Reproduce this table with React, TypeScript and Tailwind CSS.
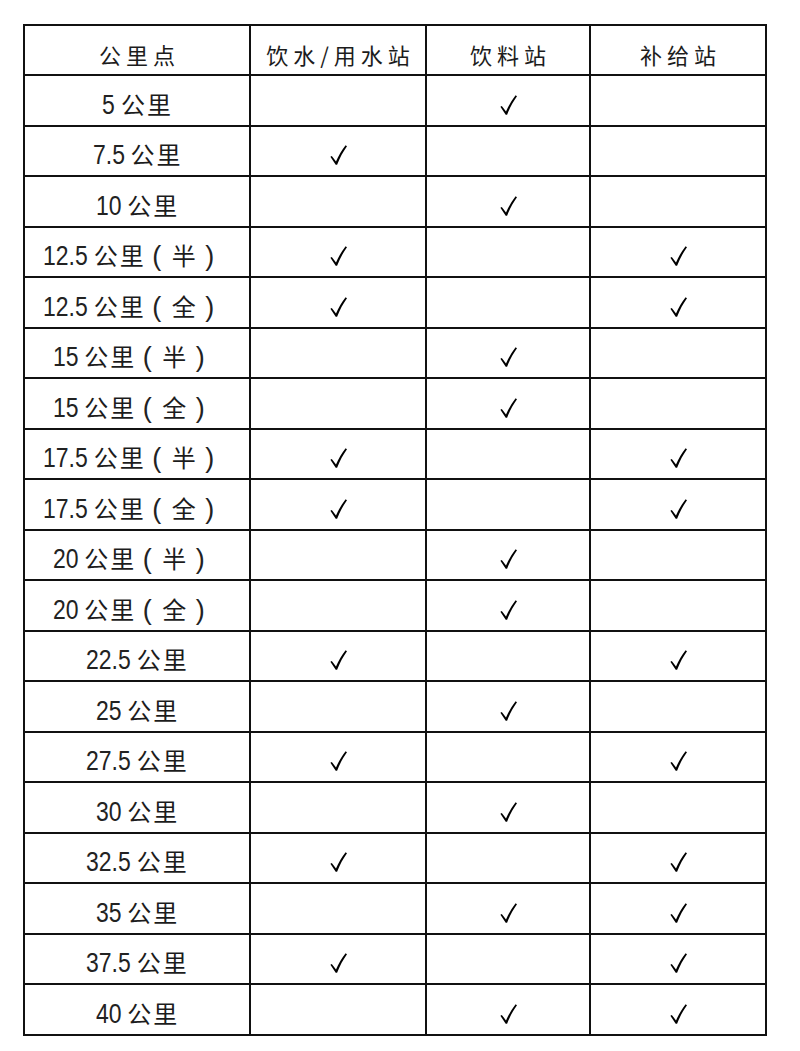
import React from "react";

type Row = { km: string; suffix?: string; a: boolean; b: boolean; c: boolean };

const rows: Row[] = [
  { km: "5", a: false, b: true, c: false },
  { km: "7.5", a: true, b: false, c: false },
  { km: "10", a: false, b: true, c: false },
  { km: "12.5", suffix: "半", a: true, b: false, c: true },
  { km: "12.5", suffix: "全", a: true, b: false, c: true },
  { km: "15", suffix: "半", a: false, b: true, c: false },
  { km: "15", suffix: "全", a: false, b: true, c: false },
  { km: "17.5", suffix: "半", a: true, b: false, c: true },
  { km: "17.5", suffix: "全", a: true, b: false, c: true },
  { km: "20", suffix: "半", a: false, b: true, c: false },
  { km: "20", suffix: "全", a: false, b: true, c: false },
  { km: "22.5", a: true, b: false, c: true },
  { km: "25", a: false, b: true, c: false },
  { km: "27.5", a: true, b: false, c: true },
  { km: "30", a: false, b: true, c: false },
  { km: "32.5", a: true, b: false, c: true },
  { km: "35", a: false, b: true, c: true },
  { km: "37.5", a: true, b: false, c: true },
  { km: "40", a: false, b: true, c: true },
];

const cjk = "font-['Noto_Sans_CJK_SC','Noto_Sans',sans-serif]";

function Check() {
  return (
    <svg width="17" height="20" viewBox="0 0 17 20" className="block">
      <path
        d="M0.4 11.8 L1.8 10.9 L6.0 16.4 C8.5 10.6 11.8 5.1 15.6 0.2 L17 1.2 C13.2 6.5 9.8 12.6 7.1 19.8 L5.7 19.8 Z"
        fill="#000"
      />
    </svg>
  );
}

function Cell({ children }: { children?: React.ReactNode }) {
  return (
    <div className="flex items-center justify-center border-r-2 border-b-2 border-[#111] pt-[9px]">
      {children}
    </div>
  );
}

function Digits({ text }: { text: string }) {
  const em = text.split("").reduce((s, ch) => s + (ch === "." ? 0.278 : 0.556), 0);
  const w = em * 28;
  return (
    <span
      className="inline-block origin-left scale-x-[0.82] font-['Liberation_Sans',sans-serif] text-[28px] leading-none text-[#222]"
      style={{ marginRight: -(w * 0.18) }}
    >
      {text}
    </span>
  );
}

function Ch({ c, cls = "w-[26px]" }: { c: string; cls?: string }) {
  return <span className={`inline-block text-center ${cls}`}>{c}</span>;
}

function Paren({ c, box }: { c: string; box: string }) {
  return (
    <span
      className={`inline-block text-center font-['Liberation_Sans',sans-serif] text-[27px] leading-none text-[#222] ${box}`}
    >
      {c}
    </span>
  );
}

export default function App() {
  return (
    <div className="w-[800px] h-[1051px] bg-white pt-[23.5px] pl-[23px]">
      <div className="grid w-[744px] grid-cols-[226px_176px_164px_176px] auto-rows-[50.5px] border-t-2 border-l-2 border-[#111] text-[#1c1c1c]">
        {["公里点", "饮水/用水站", "饮料站", "补给站"].map((h) => (
          <Cell key={h}>
            <span className={`${cjk} text-[22px] tracking-[5px] pl-[5px] leading-none`}>{h}</span>
          </Cell>
        ))}
        {rows.map((r, i) => (
          <React.Fragment key={i}>
            <Cell>
              <span className="flex items-baseline whitespace-pre leading-none">
                <Digits text={r.km} />
                <span className={`${cjk} ml-[5px] text-[24px] leading-none`}>
                  <Ch c="公" />
                  <Ch c="里" />
                  {r.suffix ? (
                    <>
                      <Paren c="(" box="w-[24px]" />
                      <Ch c={r.suffix} cls="w-[30px]" />
                      <Paren c=")" box="w-[22px] mr-[10px]" />
                    </>
                  ) : null}
                </span>
              </span>
            </Cell>
            <Cell>{r.a ? <Check /> : null}</Cell>
            <Cell>{r.b ? <Check /> : null}</Cell>
            <Cell>{r.c ? <Check /> : null}</Cell>
          </React.Fragment>
        ))}
      </div>
    </div>
  );
}
